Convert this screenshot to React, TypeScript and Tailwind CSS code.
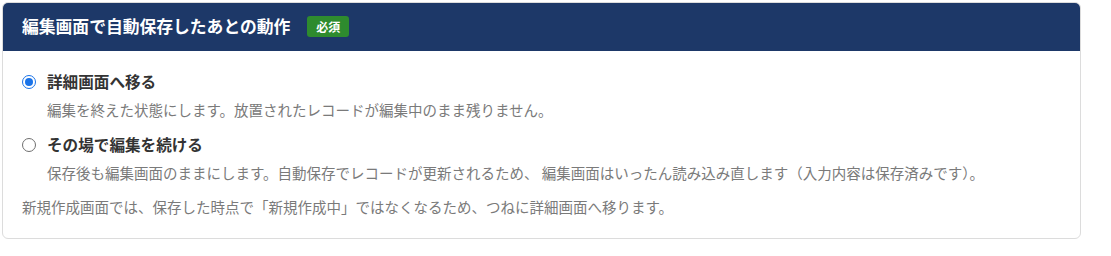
import React, { useState } from 'react';

const font = { fontFamily: '"Noto Sans CJK JP", "Noto Sans", sans-serif' };

const options = [
  {
    id: 'detail',
    label: '詳細画面へ移る',
    desc: '編集を終えた状態にします。放置されたレコードが編集中のまま残りません。',
  },
  {
    id: 'stay',
    label: 'その場で編集を続ける',
    desc: '保存後も編集画面のままにします。自動保存でレコードが更新されるため、 編集画面はいったん読み込み直します（入力内容は保存済みです）。',
  },
];

const Radio: React.FC<{ checked: boolean }> = ({ checked }) =>
  checked ? (
    <span className="w-[14px] h-[14px] rounded-full border-[1.5px] border-[#1a73e8] flex items-center justify-center shrink-0">
      <span className="w-[8px] h-[8px] rounded-full bg-[#1a73e8]" />
    </span>
  ) : (
    <span className="w-[14px] h-[14px] rounded-full border-[1.5px] border-[#6f6f6f] shrink-0" />
  );

const App: React.FC = () => {
  const [value, setValue] = useState('detail');

  return (
    <div className="bg-white w-[1111px] h-[256px] pt-[2px] pl-[2px]" style={font}>
      <div className="w-[1079px] rounded-[6px] border border-[#dcdcdc] overflow-hidden">
        <div className="bg-[#1d3868] h-[49px] flex items-center pl-[20px] gap-[17px] -mt-px -mx-px">
          <span className="text-white font-bold text-[16.8px]">編集画面で自動保存したあとの動作</span>
          <span className="bg-[#2e8b2e] text-white font-bold text-[12px] rounded-[3px] px-[9px] h-[21px] flex items-center">必須</span>
        </div>
        <div className="pl-[19px] pt-[19px] pb-[21px]">
          {options.map((o, i) => (
            <div key={o.id} className={i > 0 ? 'mt-[13px]' : ''}>
              <label className="flex items-center gap-[11px] h-[24px] cursor-pointer" onClick={() => setValue(o.id)}>
                <Radio checked={value === o.id} />
                <span className="font-bold text-[15.6px] text-[#333]">{o.label}</span>
              </label>
              <p className="pl-[25px] mt-[6px] text-[14.5px] leading-[20px] text-[#7a7a7a]">{o.desc}</p>
            </div>
          ))}
          <p className="mt-[14px] text-[14.5px] leading-[20px] text-[#7a7a7a]">
            新規作成画面では、保存した時点で「新規作成中」ではなくなるため、つねに詳細画面へ移ります。
          </p>
        </div>
      </div>
    </div>
  );
};

export default App;
